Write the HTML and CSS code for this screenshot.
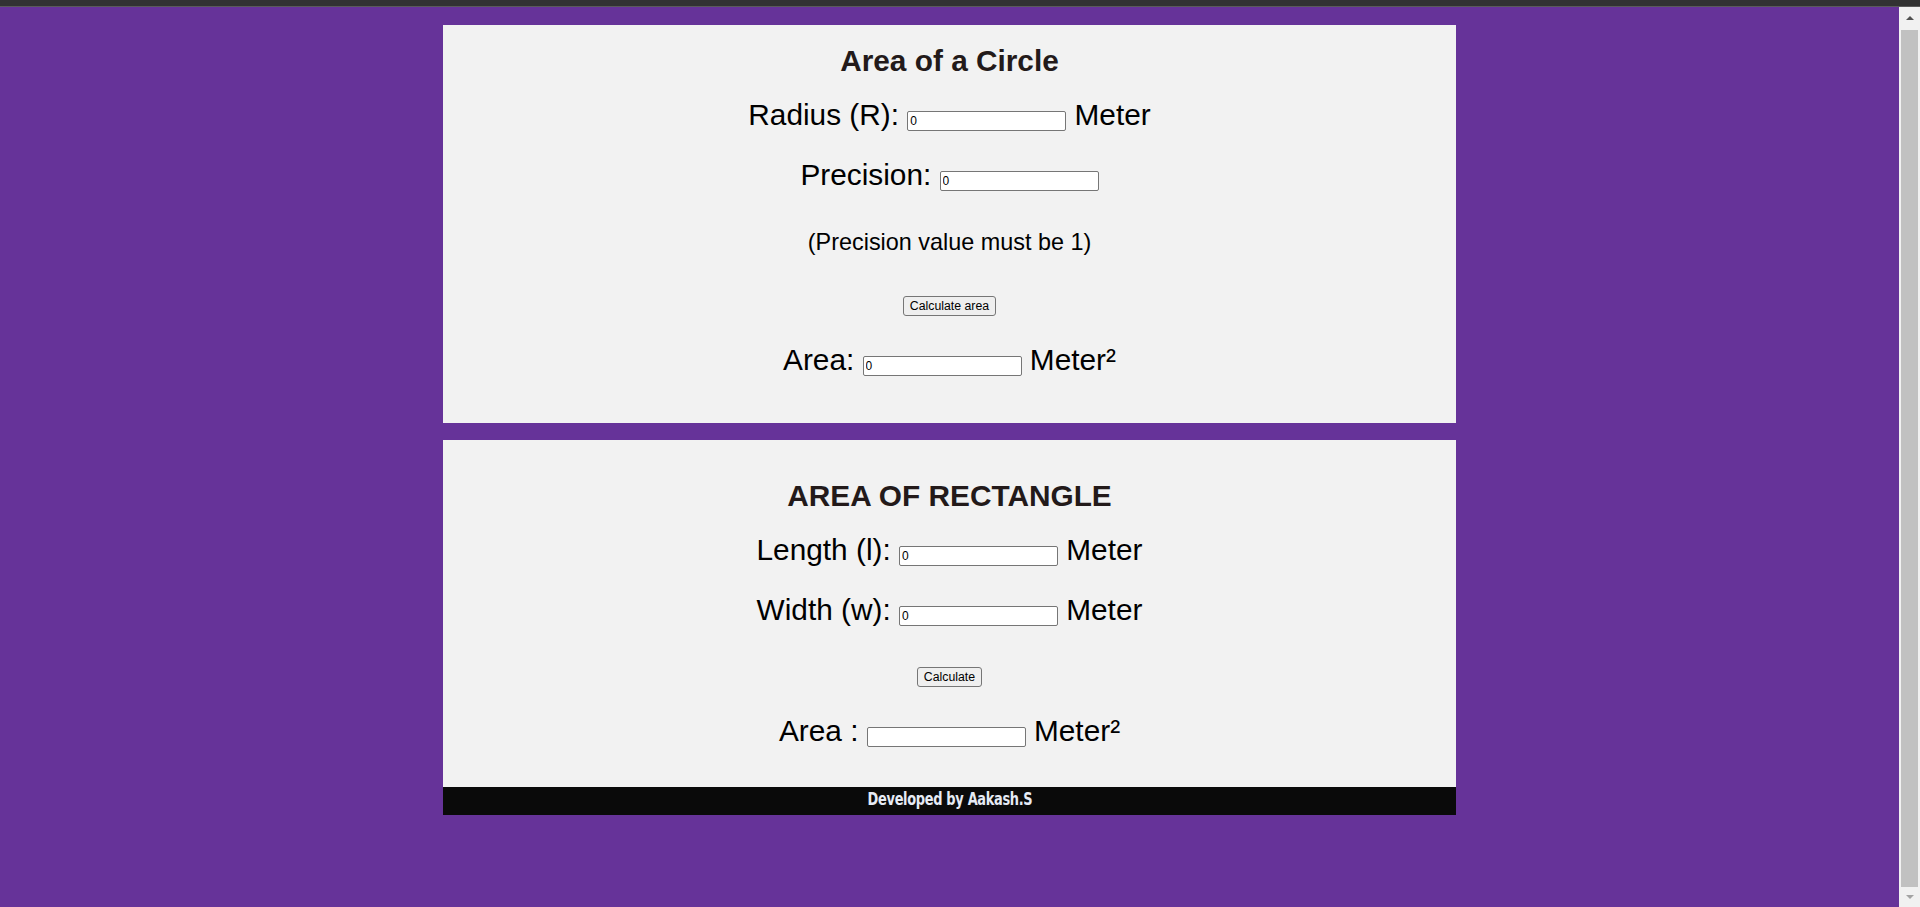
FILE: index.html
```html
<!DOCTYPE html>
<html lang="en">
<head>
<meta charset="utf-8">
<title>Area Calculator</title>
<link rel="stylesheet" href="styles.css">
</head>
<body>
<div class="topbar"></div>
<div class="window">
  <main class="page">
    <section class="card card-circle">
      <h2 class="title">Area of a Circle</h2>
      <div class="row">Radius (R): <input class="field" type="text" value="0"> Meter</div>
      <div class="row">Precision: <input class="field" type="text" value="0"></div>
      <div class="note">(Precision value must be 1)</div>
      <div class="btn-row"><button class="btn" type="button">Calculate area</button></div>
      <div class="row">Area: <input class="field" type="text" value="0"> Meter²</div>
    </section>
    <section class="card card-rect">
      <h2 class="title">AREA OF RECTANGLE</h2>
      <div class="row">Length (l): <input class="field" type="text" value="0"> Meter</div>
      <div class="row">Width (w): <input class="field" type="text" value="0"> Meter</div>
      <div class="btn-row"><button class="btn" type="button">Calculate</button></div>
      <div class="row">Area : <input class="field" type="text" value=""> Meter²</div>
    </section>
    <footer class="footer"><span class="footer-text">Developed by Aakash.S</span></footer>
  </main>
  <div class="scrollbar">
    <div class="arrow arrow-up"></div>
    <div class="thumb"></div>
    <div class="arrow arrow-down"></div>
  </div>
</div>
</body>
</html>
```
FILE: styles.css
```css
html, body {
  margin: 0;
  padding: 0;
  height: 907px;
  overflow: hidden;
}

body {
  font-family: "Liberation Sans", Arial, sans-serif;
  color: #000;
  background: #663399;
}

.topbar {
  height: 6px;
  background: #323232;
  border-bottom: 1px solid #5a5a5a;
}

.window {
  display: flex;
  height: 900px;
}

.page {
  flex: 1;
  background: #663399;
  padding-top: 18px;
}

.card {
  width: 1013px;
  margin: 0 auto;
  background: #f2f2f2;
  text-align: center;
}

.card-circle {
  padding: 18.5px 0 46px;
  margin-bottom: 17px;
}

.card-rect {
  padding: 39px 0 39.5px;
}

.title {
  margin: 0;
  font-size: 29.8px;
  line-height: 34px;
  font-weight: bold;
  color: #231a1a;
}

.row {
  margin-top: 26px;
  font-size: 29.8px;
  line-height: 34px;
  white-space: nowrap;
}

.title + .row {
  margin-top: 20px;
}

.btn-row + .row {
  margin-top: 27px;
}

.note {
  margin-top: 36px;
  font-size: 23.4px;
  line-height: 28px;
}

.btn-row {
  margin-top: 40px;
  height: 20px;
  line-height: 20px;
}

.field {
  box-sizing: border-box;
  width: 159px;
  height: 20px;
  margin: 0;
  padding: 0 2px;
  border: 1px solid #767676;
  border-radius: 2px;
  background: #fff;
  font-family: "Liberation Sans", Arial, sans-serif;
  font-size: 12px;
  color: #000;
  vertical-align: baseline;
}

.btn {
  box-sizing: border-box;
  height: 20px;
  margin: 0;
  padding: 0 6px;
  border: 1px solid #767676;
  border-radius: 3px;
  background: #efefef;
  font-family: "Liberation Sans", Arial, sans-serif;
  font-size: 12.3px;
  color: #000;
  vertical-align: top;
}

.footer {
  width: 1013px;
  height: 28px;
  margin: 0 auto;
  background: #0a0a0a;
  text-align: center;
  line-height: 24px;
}

.footer-text {
  display: inline-block;
  font-family: "DejaVu Sans Condensed", "Liberation Sans Narrow", "Liberation Sans", sans-serif;
  font-weight: bold;
  font-size: 18px;
  color: #e6ebf5;
  letter-spacing: -0.4px;
  transform: scaleX(0.8);
}

.scrollbar {
  width: 21px;
  background: #f1f1f1;
  display: flex;
  flex-direction: column;
  align-items: center;
}

.arrow {
  width: 0;
  height: 0;
  border-left: 4px solid transparent;
  border-right: 4px solid transparent;
}

.arrow-up {
  margin-top: 9px;
  border-bottom: 4px solid #505050;
}

.thumb {
  width: 17px;
  margin-top: 10px;
  height: 857px;
  background: #c1c1c1;
}

.arrow-down {
  margin-top: 8px;
  border-top: 4px solid #a3a3a3;
}
```
